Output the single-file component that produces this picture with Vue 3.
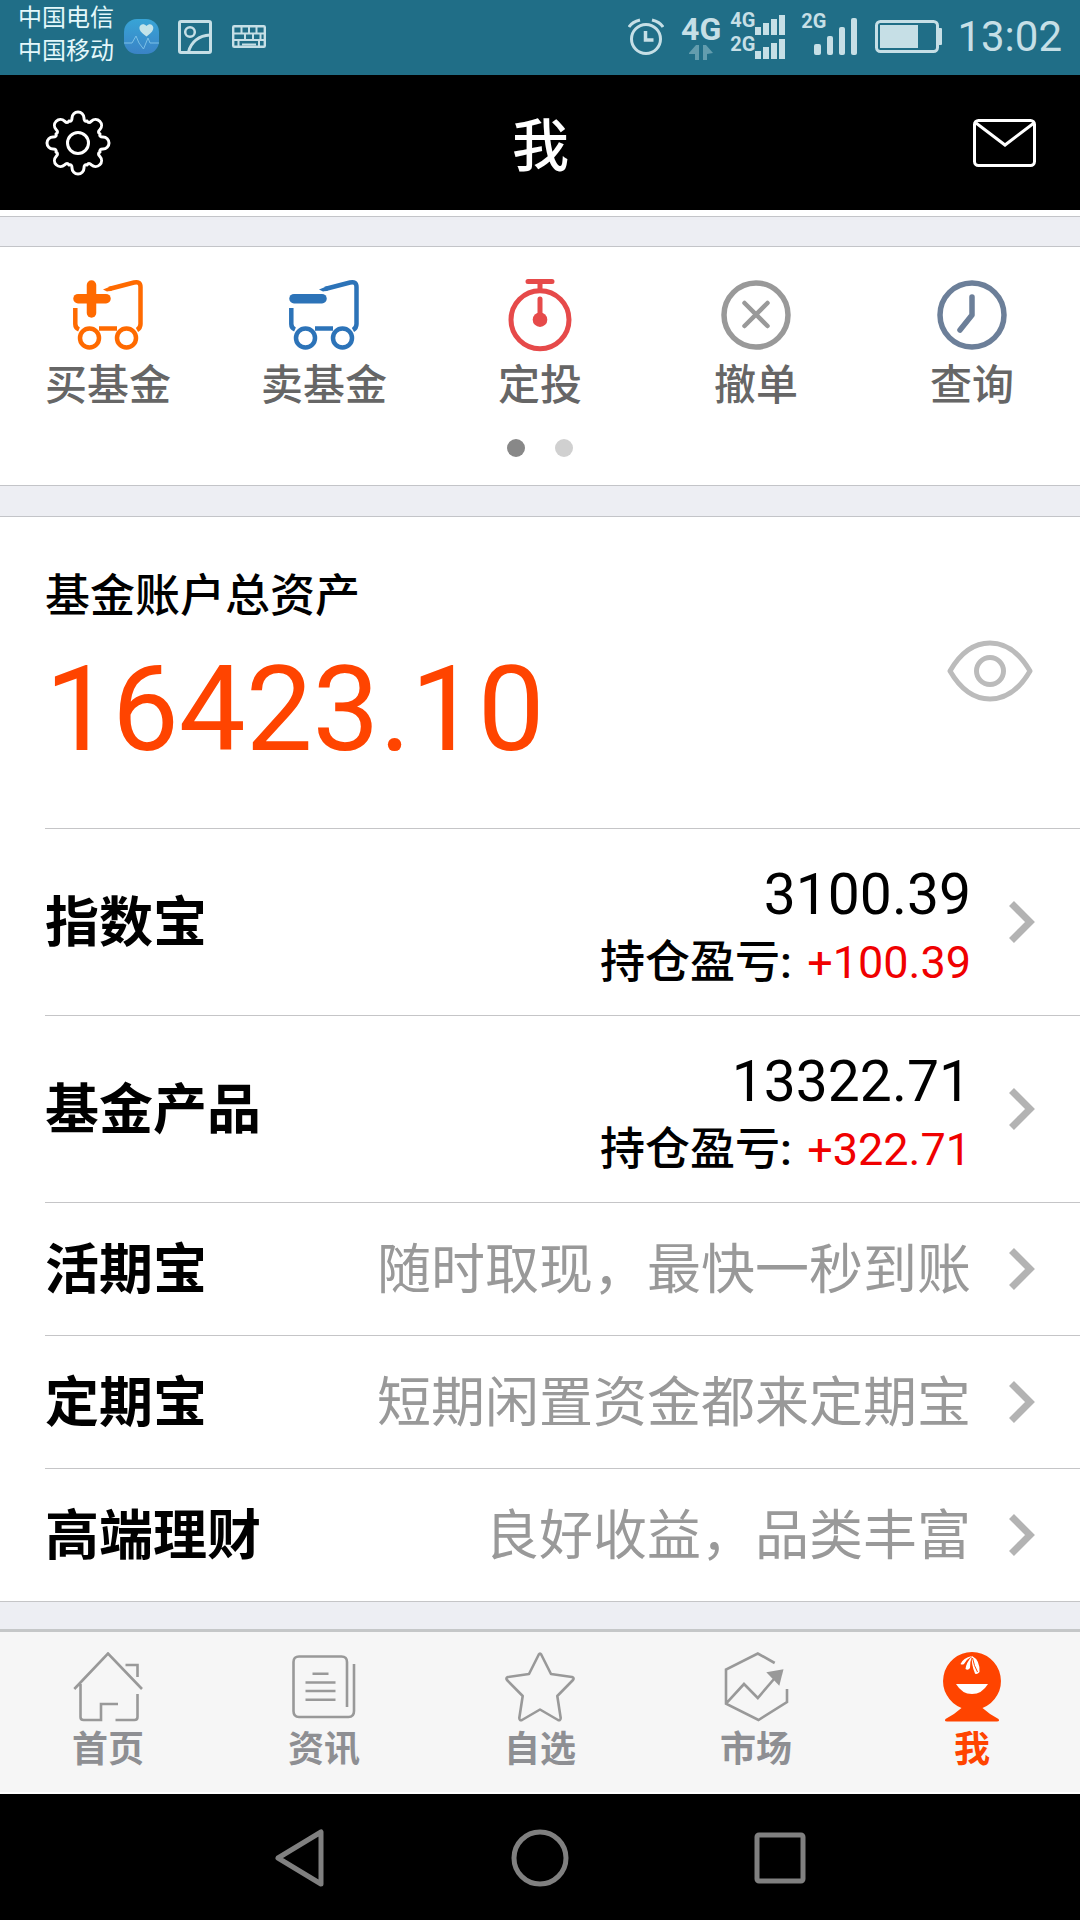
<script setup>
import { ref } from 'vue'

const gearTooth = [[-9, -22], [-6, -21], [-6, -25], [6, -25], [6, -21], [9, -22]]

function gearPath() {
  let d = ''
  for (let k = 0; k < 8; k++) {
    const a = (k * Math.PI) / 4
    const p = gearTooth.map(([x, y]) =>
      (33 + x * Math.cos(a) - y * Math.sin(a)).toFixed(2) + ' ' + (33 + x * Math.sin(a) + y * Math.cos(a)).toFixed(2)
    )
    d += (k ? 'L' : 'M') + p[0] + 'Q' + p[1] + ' ' + p[2] + 'A6 6 0 0 1 ' + p[3] + 'Q' + p[4] + ' ' + p[5]
  }
  return d + 'Z'
}

const gear = gearPath()
const amountShown = ref(true)

const tools = [
  { id: 'buy', label: '买基金' },
  { id: 'sell', label: '卖基金' },
  { id: 'plan', label: '定投' },
  { id: 'cancel', label: '撤单' },
  { id: 'query', label: '查询' }
]

const rows = [
  { name: '指数宝', amount: '3100.39', profit: '+100.39' },
  { name: '基金产品', amount: '13322.71', profit: '+322.71' },
  { name: '活期宝', hint: '随时取现，最快一秒到账' },
  { name: '定期宝', hint: '短期闲置资金都来定期宝' },
  { name: '高端理财', hint: '良好收益，品类丰富' }
]

const tabs = [
  { id: 'home', label: '首页' },
  { id: 'news', label: '资讯' },
  { id: 'star', label: '自选' },
  { id: 'market', label: '市场' },
  { id: 'me', label: '我' }
]
</script>

<template>
  <div class="page">
    <div class="status">
      <div class="carriers">
        <span>中国电信</span>
        <span>中国移动</span>
      </div>
      <svg class="health" width="35" height="35" viewBox="0 0 35 35">
        <defs>
          <linearGradient id="hg" x1="0" y1="0" x2="0" y2="1">
            <stop offset="0" stop-color="#38a4d6" />
            <stop offset="1" stop-color="#3a83c6" />
          </linearGradient>
        </defs>
        <rect width="35" height="35" rx="13" fill="url(#hg)" />
        <path d="M22.500 17.500C17 13.500 15 11 15.500 8C16.200 5 20 4 22.500 7C25 4 28.500 5 29.200 8C29.700 11 28 13.500 22.500 17.500Z" fill="#c3e3e9" />
        <path d="M0 24H8L12 17L15 24L19.500 30L24 19L26 24H35" fill="none" stroke="#7cc0e6" stroke-width="1" />
      </svg>
      <svg class="photo" width="34" height="34" viewBox="0 0 34 34" fill="none" stroke="#c6dfe6" stroke-width="3">
        <rect x="1.500" y="1.500" width="31" height="31" rx="1.500" />
        <circle cx="12" cy="12" r="4.800" stroke-width="2.500" />
        <path d="M10.500 32C13 22 21 15.500 32 15" />
      </svg>
      <svg class="keys" width="34" height="23" viewBox="0 0 34 23" fill="none" stroke="#c6dfe6" stroke-width="2">
        <rect x="1.200" y="1.200" width="31.600" height="20.600" rx="1" stroke-width="2.400" />
        <path d="M2 8.500H32M2 15H32M9.500 2V8.500M17 2V8.500M24.500 2V8.500M13 8.500V15M21 8.500V15M28.500 8.500V15M6.500 15V22M27 15V22M10 19.500H24" />
      </svg>
      <div class="spacer"></div>
      <svg class="alarm" width="36" height="38" viewBox="0 0 36 38" fill="none" stroke="#c6dfe6" stroke-width="3">
        <circle cx="18" cy="21" r="14.500" />
        <path d="M1 9Q4 4 12 2M35 9Q32 4 24 2" />
        <path d="M17.500 13V22H25.500" stroke-width="3.500" />
      </svg>
      <div class="net">
        <span>4G</span>
        <svg width="24" height="15" viewBox="0 0 24 15" fill="#639dae">
          <path d="M0 8L7 0H10V15H6V9H0ZM24 8L17 0H14V15H18V9Z" />
        </svg>
      </div>
      <div class="dual">
        <div v-for="gen in ['4G', '2G']" :key="gen" class="line">
          <span>{{ gen }}</span>
          <svg width="30" height="20" viewBox="0 0 30 20" fill="#c6dfe6">
            <path d="M0 12H6V20H0ZM8 8H14V20H8ZM16 4H22V20H16ZM24 0H30V20H24Z" />
          </svg>
        </div>
      </div>
      <div class="single">
        <span>2G</span>
        <svg width="43" height="37" viewBox="0 0 43 37" fill="#c6dfe6">
          <rect x="0" y="26" width="7" height="11" rx="2" />
          <rect x="13" y="18" width="6" height="19" rx="2" />
          <rect x="25" y="9" width="6" height="28" rx="2" />
          <rect x="37" y="0" width="6" height="37" rx="2" />
        </svg>
      </div>
      <svg class="battery" width="67" height="33" viewBox="0 0 67 33">
        <rect x="1.500" y="1.500" width="61" height="30" rx="4" fill="none" stroke="#c6dfe6" stroke-width="3" />
        <rect x="5" y="5" width="38" height="23" fill="#c6dfe6" />
        <rect x="63" y="8" width="4" height="17" rx="1" fill="#c6dfe6" />
      </svg>
      <span class="clock">13:02</span>
    </div>

    <header class="header">
      <button type="button" aria-label="设置">
        <svg width="66" height="66" viewBox="0 0 66 66" fill="none" stroke="#fff" stroke-width="3">
          <path :d="gear" stroke-linejoin="round" />
          <circle cx="33" cy="33" r="10.500" />
        </svg>
      </button>
      <h1>我</h1>
      <button type="button" aria-label="消息">
        <svg width="66" height="50" viewBox="0 0 66 50" fill="none" stroke="#fff" stroke-width="3">
          <rect x="4.500" y="2.500" width="60" height="45" rx="4" />
          <path d="M6 5L35 27L64 5" />
        </svg>
      </button>
    </header>

    <div class="band first"></div>

    <section class="tools">
      <div class="tool-grid">
        <button v-for="t in tools" :key="t.id" type="button" class="tool">
          <svg width="70" height="74" viewBox="0 -2 70 74" fill="none" stroke-linecap="round">
            <g v-if="t.id === 'buy' || t.id === 'sell'" :stroke="t.id === 'buy' ? '#ff6a00' : '#2c73b8'" stroke-width="4.500">
              <path d="M5 18.700H33" stroke-width="9.500" />
              <path v-if="t.id === 'buy'" d="M18.500 5V33" stroke-width="9.500" />
              <path d="M36 9L61 2.500Q67.500 1 67.500 7V44Q67.500 48 64 50M2.300 28V44Q2.300 48 6 49.500" stroke-linecap="butt" />
              <path d="M30 9.500L38 6.200L39 10.400L34 11.500Z" :fill="t.id === 'buy' ? '#ff6a00' : '#2c73b8'" stroke="none" />
              <path d="M26 48.500H44" stroke-linecap="butt" />
              <circle cx="16.500" cy="58" r="9.500" />
              <circle cx="53.500" cy="58" r="9.500" />
            </g>
            <g v-else-if="t.id === 'plan'" stroke="#e64a4a" stroke-width="5">
              <path d="M23 1.500H47M35 2V10M35 19V39" />
              <circle cx="35" cy="39.700" r="29" />
              <circle cx="35" cy="39.700" r="7.300" fill="#e64a4a" stroke="none" />
            </g>
            <g v-else-if="t.id === 'cancel'" stroke="#999" stroke-width="5.500">
              <circle cx="35" cy="35" r="32" />
              <path d="M23.500 23L46.500 46M46.500 23L23.500 46" stroke-width="4.500" />
            </g>
            <g v-else stroke="#6c7f99" stroke-width="5.500" stroke-linejoin="round">
              <circle cx="35" cy="35" r="32" />
              <path d="M35 17V35L23 50" />
            </g>
          </svg>
          <span>{{ t.label }}</span>
        </button>
      </div>
      <div class="dots"><i class="on"></i><i></i></div>
    </section>

    <div class="band"></div>

    <main class="account">
      <section class="total">
        <div>
          <h2>基金账户总资产</h2>
          <p class="sum">{{ amountShown ? '16423.10' : '****' }}</p>
        </div>
        <button type="button" aria-label="显示或隐藏金额" @click="amountShown = !amountShown">
          <svg width="86" height="62" viewBox="0 0 86 62" fill="none" stroke="#bbb" stroke-width="5">
            <path d="M3 31C14 12 27 3 43 3S72 12 83 31C72 50 59 59 43 59S14 50 3 31Z" stroke-linejoin="round" />
            <circle cx="43" cy="31" r="13.500" />
          </svg>
        </button>
      </section>
      <a v-for="r in rows" :key="r.name" href="#" class="row" :class="{ tall: r.amount }">
        <strong>{{ r.name }}</strong>
        <span v-if="r.hint" class="hint">{{ r.hint }}</span>
        <span v-else class="value">
          <span class="amount">{{ r.amount }}</span>
          <span class="profit">持仓盈亏: <em>{{ r.profit }}</em></span>
        </span>
        <svg width="26" height="42" viewBox="0 0 26 42" fill="none" stroke="#b3b3b3" stroke-width="7">
          <path d="M2.500 2.500L21 21L2.500 39.500" />
        </svg>
      </a>
    </main>

    <div class="filler"></div>

    <nav class="tabs">
      <a v-for="t in tabs" :key="t.id" href="#" :class="{ active: t.id === 'me' }">
        <svg width="70" height="70" viewBox="0 0 70 70" fill="none" stroke="#999" stroke-width="2.600">
          <path v-if="t.id === 'home'" d="M1.300 37L35 1.500L69 37M7.500 32V65Q7.500 68 10.500 68H28V52H45M42.500 68H61.500Q64.500 68 64.500 65V42M52.500 13H64.500V25" />
          <path v-else-if="t.id === 'news'" d="M58 55V10Q58 4.500 52.500 4.500H10Q4.500 4.500 4.500 10V59Q4.500 65 10 65H59.500Q65 65 65 59V12M23.500 21.700H39.500M16.500 30.500H46.500M16.500 39H46.500M16.500 47.700H46.500" />
          <path v-else-if="t.id === 'star'" stroke-linejoin="round" d="M33.800 2.500Q35 0.500 36.200 2.500L46 22L67 25Q69.500 26 68 28L52.300 44L55.700 66Q55.500 69 53 68L35 57.500L17 68Q14.500 69 14.300 66L17.700 44L2 28Q0.500 26 3 25L24 22Z" />
          <g v-else-if="t.id === 'market'">
            <path d="M53.700 11L36.800 1.500L5 17.500V51.700L37.500 68L66 50V37M5 51.700L23 32L36.800 46L53 27" />
            <path d="M62.500 17.300L45.300 20.300L58.300 33.700Z" fill="#999" stroke="none" />
          </g>
          <g v-else stroke="none">
            <path d="M35 0A29 29 0 0 1 45.500 56Q52 62 61.500 67Q63 69.500 60 69.500H10Q7 69.500 8.500 67Q18 62 24.500 56A29 29 0 0 1 35 0Z" fill="#ff4400" />
            <path d="M19 32H51Q45 42 35 42T19 32Z" fill="#fff" />
            <path d="M35 4Q26 6 23.500 12Q25 13 27 12Q30 7 35 4ZM35 4Q29 11 28.500 17Q31 19 33 16Q33 9 35 4ZM35 4Q34 12 38 21.500Q40 23 42.500 20Q43 8 35 4Z" fill="#fff" />
            <path d="M35.500 6Q37 14 40.500 20" fill="none" stroke="#ff4400" stroke-width="1" />
          </g>
        </svg>
        <span>{{ t.label }}</span>
      </a>
    </nav>

    <div class="system">
      <button type="button" aria-label="返回">
        <svg width="60" height="60" viewBox="0 0 60 60"><path d="M8 30L51 4V56Z" /></svg>
      </button>
      <button type="button" aria-label="主屏幕">
        <svg width="60" height="60" viewBox="0 0 60 60"><circle cx="30" cy="30" r="26" /></svg>
      </button>
      <button type="button" aria-label="最近任务">
        <svg width="60" height="60" viewBox="0 0 60 60"><rect x="7" y="7" width="46" height="46" rx="2" /></svg>
      </button>
    </div>
  </div>
</template>

<style>
body {
  margin: 0;
  background: #fff;
}
</style>

<style scoped>
.page {
  display: flex;
  flex-direction: column;
  min-height: 100vh;
  background: #fff;
  color: #000;
  font-family: Roboto, "Noto Sans CJK SC", sans-serif;
}
svg {
  display: block;
  flex: none;
}
button {
  padding: 0;
  border: 0;
  background: none;
  font: inherit;
  color: inherit;
}
a {
  color: inherit;
  text-decoration: none;
}
h1,
h2,
p {
  margin: 0;
  font-weight: 400;
}

.status {
  display: flex;
  align-items: center;
  box-sizing: border-box;
  height: 75px;
  padding: 0 18px 2px;
  background: #206e87;
  color: #c6dfe6;
}
.carriers {
  display: flex;
  flex-direction: column;
  height: 70px;
  margin-right: 10px;
  font-size: 24px;
  line-height: 33px;
  color: #e4f8fb;
}
.photo {
  margin-left: 19px;
}
.keys {
  margin-left: 20px;
}
.spacer {
  flex: 1;
}
.net {
  display: flex;
  flex-direction: column;
  align-items: center;
  margin-left: 17px;
  font-size: 32px;
  font-weight: 700;
  line-height: 32px;
}
.dual {
  display: flex;
  flex-direction: column;
  gap: 4px;
  margin-left: 9px;
}
.line {
  display: flex;
  align-items: flex-end;
}
.line span,
.single span {
  font-size: 20px;
  font-weight: 700;
}
.line span {
  height: 20px;
  line-height: 10px;
}
.single {
  display: flex;
  align-items: center;
  margin: 0 18px 0 16px;
}
.single span {
  height: 50px;
  line-height: 18px;
  margin-right: -12px;
}
.clock {
  margin-left: 15px;
  font-size: 42px;
}

.header {
  display: flex;
  align-items: center;
  justify-content: space-between;
  height: 135px;
  padding: 0 44px 0 45px;
  background: #000;
  color: #fff;
}
.header h1 {
  padding-top: 8px;
  font-size: 57px;
  font-weight: 500;
  line-height: 80px;
}

.band {
  height: 30px;
  border-top: 1px solid #c3c4c8;
  border-bottom: 1px solid #c3c4c8;
  background: #edeef3;
}
.band.first {
  height: 29px;
  margin-top: 6px;
}

.tools {
  padding: 31px 0 28px;
}
.tool-grid {
  display: grid;
  grid-template-columns: repeat(5, 1fr);
}
.tool {
  display: flex;
  flex-direction: column;
  align-items: center;
  font-size: 42px;
  font-weight: 500;
  line-height: 68px;
  color: #666;
}
.dots {
  display: flex;
  justify-content: center;
  gap: 30px;
  padding-top: 19px;
}
.dots i {
  width: 18px;
  height: 18px;
  border-radius: 50%;
  background: #d0d0d0;
}
.dots .on {
  background: #888;
}

.account {
  border-bottom: 1px solid #c5c5c7;
}
.total {
  display: flex;
  align-items: center;
  justify-content: space-between;
  box-sizing: border-box;
  height: 311px;
  padding: 0 47px 0 45px;
}
.total div {
  padding-top: 8px;
}
.total button {
  margin-bottom: 4px;
}
.total h2 {
  font-size: 45px;
  font-weight: 500;
  line-height: 66px;
}
.sum {
  font-size: 119px;
  line-height: 160px;
  color: #ff4400;
}
.row {
  display: flex;
  align-items: center;
  height: 132px;
  margin-left: 45px;
  padding-right: 45px;
  border-top: 1px solid #c5c5c7;
}
.row.tall {
  height: 186px;
}
.row strong {
  flex: 1;
  padding-bottom: 7px;
  font-size: 54px;
  font-weight: 700;
}
.row svg {
  margin-left: 38px;
}
.hint {
  padding-bottom: 7px;
  font-size: 54px;
  color: #999;
}
.value {
  display: flex;
  flex-direction: column;
  align-items: flex-end;
  padding-top: 12px;
}
.amount {
  font-size: 57px;
  line-height: 70px;
}
.profit {
  font-size: 45px;
  font-weight: 500;
  line-height: 66px;
}
.profit em {
  margin-left: 4px;
  font-style: normal;
  font-weight: 400;
  color: #f00000;
}

.filler {
  flex: 1;
  min-height: 26px;
  background: #edeef3;
}
.tabs {
  display: grid;
  grid-template-columns: repeat(5, 1fr);
  box-sizing: border-box;
  height: 165px;
  padding-top: 20px;
  border-top: 3px solid #c5c7c8;
  border-bottom: 2px solid #fff;
  background: #f6f6f6;
  color: #8e8f93;
}
.tabs a {
  display: flex;
  flex-direction: column;
  align-items: center;
  font-size: 36px;
  font-weight: 700;
  line-height: 56px;
}
.tabs .active {
  color: #ff4400;
}

.system {
  display: flex;
  align-items: center;
  justify-content: center;
  gap: 180px;
  box-sizing: border-box;
  height: 126px;
  padding-top: 2px;
  background: #000;
}
.system svg {
  fill: none;
  stroke: #808080;
  stroke-width: 5;
  stroke-linejoin: round;
}
</style>
